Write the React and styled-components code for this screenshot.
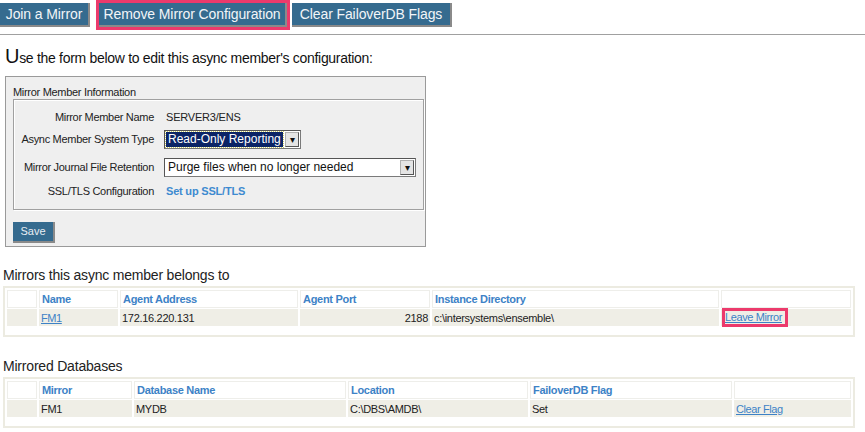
import React from "react";
import styled, { createGlobalStyle } from "styled-components";

const GlobalStyle = createGlobalStyle`
  body {
    margin: 0;
    background: #fff;
    font-family: "Liberation Sans", Arial, sans-serif;
    color: #222;
  }
`;

const mirrors = [
  { name: "FM1", address: "172.16.220.131", port: 2188, dir: "c:\\intersystems\\ensemble\\" },
];

const databases = [
  { mirror: "FM1", name: "MYDB", location: "C:\\DBS\\AMDB\\", flag: "Set" },
];

const mirrorCols = [30, 79, 178, 130, 287, null];
const dbCols = [30, 93, 212, 180, 202, null];

const Cols = ({ widths }) => (
  <colgroup>
    {widths.map((w, i) => (
      <col key={i} style={w ? { width: w } : undefined} />
    ))}
  </colgroup>
);

const App = () => {
  return (
    <Page>
      <GlobalStyle />
      <Toolbar>
        <TabButton $width={90}>Join a Mirror</TabButton>
        <TabButton $width={188} $marked>
          Remove Mirror Configuration
        </TabButton>
        <TabButton $width={160}>Clear FailoverDB Flags</TabButton>
      </Toolbar>
      <Divider />

      <Intro>
        <BigLetter>U</BigLetter>se the form below to edit this async member's configuration:
      </Intro>

      <Panel>
        <PanelTitle>Mirror Member Information</PanelTitle>
        <Fieldset>
          <FieldRow $h={17}>
            <FieldLabel>Mirror Member Name</FieldLabel>
            <FieldValue>SERVER3/ENS</FieldValue>
          </FieldRow>
          <FieldRow $h={28}>
            <FieldLabel>Async Member System Type</FieldLabel>
            <Select $width={137}>
              <SelectText $selected>Read-Only Reporting</SelectText>
              <SelectArrow>▾</SelectArrow>
            </Select>
          </FieldRow>
          <FieldRow $h={28}>
            <FieldLabel>Mirror Journal File Retention</FieldLabel>
            <Select $width={252}>
              <SelectText>Purge files when no longer needed</SelectText>
              <SelectArrow>▾</SelectArrow>
            </Select>
          </FieldRow>
          <FieldRow $h={20}>
            <FieldLabel>SSL/TLS Configuration</FieldLabel>
            <BoldLink>Set up SSL/TLS</BoldLink>
          </FieldRow>
        </Fieldset>
        <SaveButton>Save</SaveButton>
      </Panel>

      <SectionTitle>Mirrors this async member belongs to</SectionTitle>
      <TableBox>
        <Table>
          <Cols widths={mirrorCols} />
          <thead>
            <tr>
              <Th />
              <Th>Name</Th>
              <Th>Agent Address</Th>
              <Th>Agent Port</Th>
              <Th>Instance Directory</Th>
              <Th />
            </tr>
          </thead>
          <tbody>
            {mirrors.map((m) => (
              <tr key={m.name}>
                <Td />
                <Td>
                  <Link>{m.name}</Link>
                </Td>
                <Td>{m.address}</Td>
                <Td $right>{m.port}</Td>
                <Td>{m.dir}</Td>
                <Td>
                  <MarkedLink>Leave Mirror</MarkedLink>
                </Td>
              </tr>
            ))}
          </tbody>
        </Table>
      </TableBox>

      <SectionTitle $gap={20}>Mirrored Databases</SectionTitle>
      <TableBox>
        <Table>
          <Cols widths={dbCols} />
          <thead>
            <tr>
              <Th />
              <Th>Mirror</Th>
              <Th>Database Name</Th>
              <Th>Location</Th>
              <Th>FailoverDB Flag</Th>
              <Th />
            </tr>
          </thead>
          <tbody>
            {databases.map((d) => (
              <tr key={d.name}>
                <Td />
                <Td>{d.mirror}</Td>
                <Td>{d.name}</Td>
                <Td>{d.location}</Td>
                <Td>{d.flag}</Td>
                <Td>
                  <Link>Clear Flag</Link>
                </Td>
              </tr>
            ))}
          </tbody>
        </Table>
      </TableBox>
    </Page>
  );
};

const Page = styled.div`
  width: 865px;
  height: 432px;
  overflow: hidden;
`;

const Toolbar = styled.div`
  display: flex;
  padding-top: 3px;
  height: 26px;
`;

const TabButton = styled.div`
  width: ${(p) => p.$width}px;
  height: 24px;
  box-sizing: border-box;
  margin-left: ${(p) => (p.$marked ? 9 : 0)}px;
  margin-right: ${(p) => (p.$marked ? 5 : 0)}px;
  background: #356b8f;
  color: #f2f5f8;
  font-size: 14px;
  letter-spacing: -0.1px;
  line-height: 23px;
  text-align: center;
  border-right: 2px solid #8a8a8a;
  border-bottom: 2px solid #8a8a8a;
  outline: ${(p) => (p.$marked ? "3px solid #ec3a6c" : "none")};
`;

const Divider = styled.div`
  margin-top: 5px;
  height: 1px;
  background: #a0a0a0;
`;

const Intro = styled.div`
  margin: 10px 0 0 5px;
  height: 22px;
  font-size: 14px;
  letter-spacing: -0.3px;
  line-height: 22px;
  color: #111;
`;

const BigLetter = styled.span`
  font-size: 20px;
`;

const Panel = styled.div`
  margin: 9px 0 0 5px;
  width: 421px;
  height: 171px;
  box-sizing: border-box;
  background: #efefef;
  border: 1px solid #9a9a9a;
  padding: 8px 0 0 7px;
`;

const PanelTitle = styled.div`
  font-size: 11px;
  letter-spacing: -0.3px;
  line-height: 14px;
  color: #222;
`;

const Fieldset = styled.div`
  width: 411px;
  box-sizing: border-box;
  border: 1px solid #a0a0a0;
  box-shadow: inset 1px 1px 0 #fff, 1px 1px 0 #fff;
  padding: 8px 0 8px 0;
  display: flex;
  flex-direction: column;
`;

const FieldRow = styled.div`
  display: grid;
  grid-template-columns: 140px auto;
  column-gap: 10px;
  align-items: center;
  height: ${(p) => p.$h}px;
`;

const FieldLabel = styled.div`
  text-align: right;
  font-size: 11px;
  letter-spacing: -0.3px;
  color: #222;
`;

const FieldValue = styled.div`
  font-size: 11px;
  letter-spacing: -0.2px;
  color: #222;
  padding-left: 2px;
`;

const Select = styled.div`
  width: ${(p) => p.$width}px;
  height: 19px;
  box-sizing: border-box;
  display: flex;
  align-items: stretch;
  background: #fff;
  border: 1px solid #7a7a7a;
  border-top-color: #555;
  border-left-color: #555;
  padding: 1px;
`;

const SelectText = styled.div`
  flex: 1;
  font-size: 12px;
  line-height: 15px;
  padding-left: 2px;
  color: ${(p) => (p.$selected ? "#fff" : "#111")};
  background: ${(p) => (p.$selected ? "#0b2466" : "transparent")};
  outline: ${(p) => (p.$selected ? "1px dotted #cccc66" : "none")};
  white-space: nowrap;
`;

const SelectArrow = styled.div`
  width: 14px;
  margin-left: 2px;
  background: #e4e4e4;
  border: 1px solid #b0b0b0;
  border-right-color: #555;
  border-bottom-color: #555;
  box-sizing: border-box;
  font-size: 10px;
  line-height: 14px;
  text-align: center;
  color: #111;
`;

const BoldLink = styled.span`
  font-size: 11px;
  font-weight: bold;
  letter-spacing: -0.2px;
  color: #3d8ad0;
  padding-left: 2px;
`;

const SaveButton = styled.div`
  margin-top: 12px;
  width: 42px;
  height: 21px;
  box-sizing: border-box;
  background: #356b8f;
  color: #e8eef3;
  font-size: 11px;
  line-height: 19px;
  text-align: center;
  border-right: 2px solid #8a8a8a;
  border-bottom: 2px solid #8a8a8a;
`;

const SectionTitle = styled.div`
  margin: ${(p) => p.$gap ?? 19}px 0 0 3px;
  font-size: 14px;
  letter-spacing: -0.2px;
  line-height: 18px;
  color: #222;
`;

const TableBox = styled.div`
  margin: 2px 10px 0 3px;
  border: 2px solid #ecebe1;
  padding: 1px 0 8px 0;
`;

const Table = styled.table`
  width: 100%;
  table-layout: fixed;
  border-collapse: separate;
  border-spacing: 2px 1px;
  font-size: 11px;
  letter-spacing: -0.3px;
`;

const Th = styled.th`
  height: 16px;
  padding: 0 2px;
  text-align: left;
  font-weight: bold;
  color: #3d82c6;
  background: #fff;
  border: 1px solid #eeeeea;
`;

const Td = styled.td`
  height: 17px;
  padding: 0 2px;
  text-align: ${(p) => (p.$right ? "right" : "left")};
  background: #efeee6;
  color: #222;
  white-space: nowrap;
`;

const Link = styled.span`
  color: #3d82c6;
  text-decoration: underline;
  font-size: 11px;
  letter-spacing: -0.4px;
`;

const MarkedLink = styled(Link)`
  display: inline-block;
  margin: -2px 0 -2px -1px;
  padding: 3px 6px 3px 3px;
  line-height: 13px;
  outline: 3px solid #ec3a6c;
  outline-offset: -3px;
`;

export default App;
